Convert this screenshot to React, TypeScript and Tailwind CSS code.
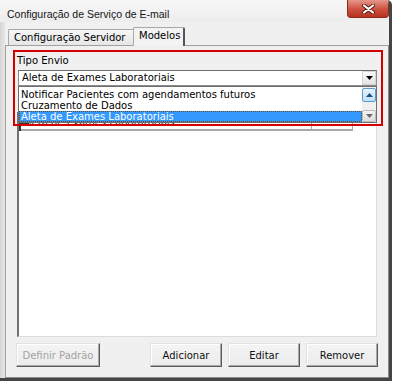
const items = [
  'Notificar Pacientes com agendamentos futuros',
  'Cruzamento de Dados',
  'Aleta de Exames Laboratoriais',
]

function Arrow({ up, color }: { up?: boolean; color: string }) {
  return (
    <svg width="7" height="4" viewBox="0 0 7 4">
      <path d={up ? 'M0 4 L3.5 0 L7 4 Z' : 'M0 0 L7 0 L3.5 4 Z'} fill={color} />
    </svg>
  )
}

function WinButton({ label, width, disabled }: { label: string; width: string; disabled?: boolean }) {
  return (
    <div
      className={`flex h-[24px] items-center justify-center pt-[2px] ${width} border border-[#e2e2e2] border-r-[#5a5a5a] border-b-[#5a5a5a] bg-gradient-to-b from-[#f4f4f4] to-[#ebebeb] shadow-[inset_-1px_-1px_0_#a8a8a8,inset_1px_1px_0_#ffffff] text-[10px] leading-[12px] ${disabled ? 'text-[#a3a3a3]' : 'text-[#111]'}`}
    >
      {label}
    </div>
  )
}

export default function App() {
  return (
    <div className="w-[398px] h-[384px] overflow-hidden bg-white font-['DejaVu_Sans',sans-serif] text-black">
      <div className="flex h-[381px] w-[392px] flex-col overflow-hidden rounded-tr-[5px] border-r-[3px] border-b-[3px] border-[#454545] bg-[#f0f0f0]">
        {/* title bar */}
        <div className="flex h-[22px] shrink-0 items-start bg-gradient-to-b from-[#f7f7f7] to-[#ededed]">
          <span className="pl-[7px] pt-[8px] font-['Liberation_Sans',sans-serif] text-[10.5px] leading-[12px] text-[#151515]">
            Configuração de Serviço de E-mail
          </span>
          <div className="ml-auto flex h-[18px] w-[42px] items-center justify-center rounded-b-[4px] border border-t-0 border-[#8a2b20] bg-gradient-to-b from-[#e4978b] via-[#cf5444] to-[#b8321f]">
            <svg width="13" height="10" viewBox="0 0 13 10">
              <path d="M2 1.5 L11 8.5 M11 1.5 L2 8.5" stroke="#5b1d14" strokeWidth="4" strokeLinecap="round" />
              <path d="M2 1.5 L11 8.5 M11 1.5 L2 8.5" stroke="#ffffff" strokeWidth="2.2" strokeLinecap="round" />
            </svg>
          </div>
        </div>

        <div className="flex flex-1">
          {/* left frame */}
          <div className="w-[5px] bg-gradient-to-r from-[#d6d6d6] to-[#e6e6e6]" />

          <div className="flex flex-1 flex-col">
            {/* tab strip */}
            <div className="flex h-[23px] shrink-0 items-end pl-[3px]">
              <div className="flex h-[16px] w-[125px] items-center rounded-tl-[2px] border-t border-l border-[#a8a8a8] bg-gradient-to-b from-[#f6f6f6] to-[#e6e6e6] pl-[5px] text-[10px] leading-[12px]">
                Configuração Servidor
              </div>
              <div className="relative z-10 -mb-[1px] flex h-[19px] w-[52px] items-center rounded-t-[2px] border-t border-l border-r-[2px] border-[#a8a8a8] border-r-[#555555] bg-[#f3f3f3] pl-[5px] pb-[2px] text-[10px] leading-[12px]">
                Modelos
              </div>
            </div>

            {/* tab page */}
            <div className="relative flex flex-1 flex-col border border-[#a0a0a0] border-r-[#8a8a8a] border-b-[#8a8a8a]">
              <div className="mt-[9px] ml-[11px] text-[10px] leading-[12px]">Tipo Envio</div>

              {/* combo */}
              <div className="mt-[3px] ml-[12px] flex h-[16px] w-[359px] items-center border border-[#8c8c8c] border-t-[#6c6c6c] bg-white">
                <span className="flex-1 pl-[3px] text-[10px] leading-[12px]">Aleta de Exames Laboratoriais</span>
                <div className="flex h-[14px] w-[14px] items-center justify-center border border-[#d5d5d5] bg-gradient-to-b from-[#fafafa] to-[#e4e4e4]">
                  <Arrow color="#000000" />
                </div>
              </div>

              {/* list view */}
              <div className="mt-[26px] ml-[11px] flex h-[225px] w-[360px] flex-col border-t-[2px] border-l-[2px] border-r border-b border-[#707070] border-r-[#dcdcdc] border-b-[#dcdcdc] bg-white">
                <div className="relative mt-[3px] flex h-[14px] w-[334px] items-center border-b-[2px] border-[#a8a8a8]">
                  <div className="absolute left-0 top-[5px] h-[9px] w-[10px] border-t-[2px] border-l-[2px] border-[#333333]" />
                  <span className="pl-[3px] text-[10px] leading-[12px] text-[#222]">Aleta de Exames Laboratoriais</span>
                  <div className="ml-auto h-[14px] w-[42px] border-x border-[#a8a8a8]" />
                </div>
              </div>

              {/* buttons */}
              <div className="mt-[6px] ml-[10px] flex items-center">
                <WinButton label="Definir Padrão" width="w-[84px]" disabled />
                <div className="ml-[50px] flex gap-[6px]">
                  <WinButton label="Adicionar" width="w-[72px]" />
                  <WinButton label="Editar" width="w-[72px]" />
                  <WinButton label="Remover" width="w-[72px]" />
                </div>
              </div>

              {/* open dropdown list */}
              <div className="absolute left-[12px] top-[40px] z-20 flex h-[37px] w-[359px] border border-[#6e6e6e] bg-white">
                <div className="flex flex-1 flex-col pt-[2px]">
                  {items.map((t, i) => (
                    <div
                      key={t}
                      className={
                        i === 2
                          ? 'h-[11px] border border-dotted border-[#6a4a20] bg-[#3399ff] pl-[1px] text-[10px] leading-[9px] text-white'
                          : 'h-[11px] pl-[2px] text-[10px] leading-[11px]'
                      }
                    >
                      {t}
                    </div>
                  ))}
                </div>
                <div className="flex w-[14px] flex-col bg-[#f0f0f0]">
                  <div className="mt-[1px] flex h-[14px] items-center justify-center rounded-[2px] border border-[#5c9ccc] bg-gradient-to-b from-[#e6f3fc] to-[#bfdff5]">
                    <Arrow up color="#1d4f7c" />
                  </div>
                  <div className="flex-1" />
                  <div className="flex h-[12px] items-center justify-center rounded-[2px] border border-[#bcbcbc] bg-gradient-to-b from-[#f4f4f4] to-[#dedede]">
                    <Arrow color="#6a6a6a" />
                  </div>
                </div>
              </div>

              {/* red annotation frame */}
              <div className="pointer-events-none absolute left-[7px] top-[4px] z-30 h-[76px] w-[370px] border-2 border-[#d40000]" />
            </div>
          </div>
        </div>
      </div>
    </div>
  )
}
